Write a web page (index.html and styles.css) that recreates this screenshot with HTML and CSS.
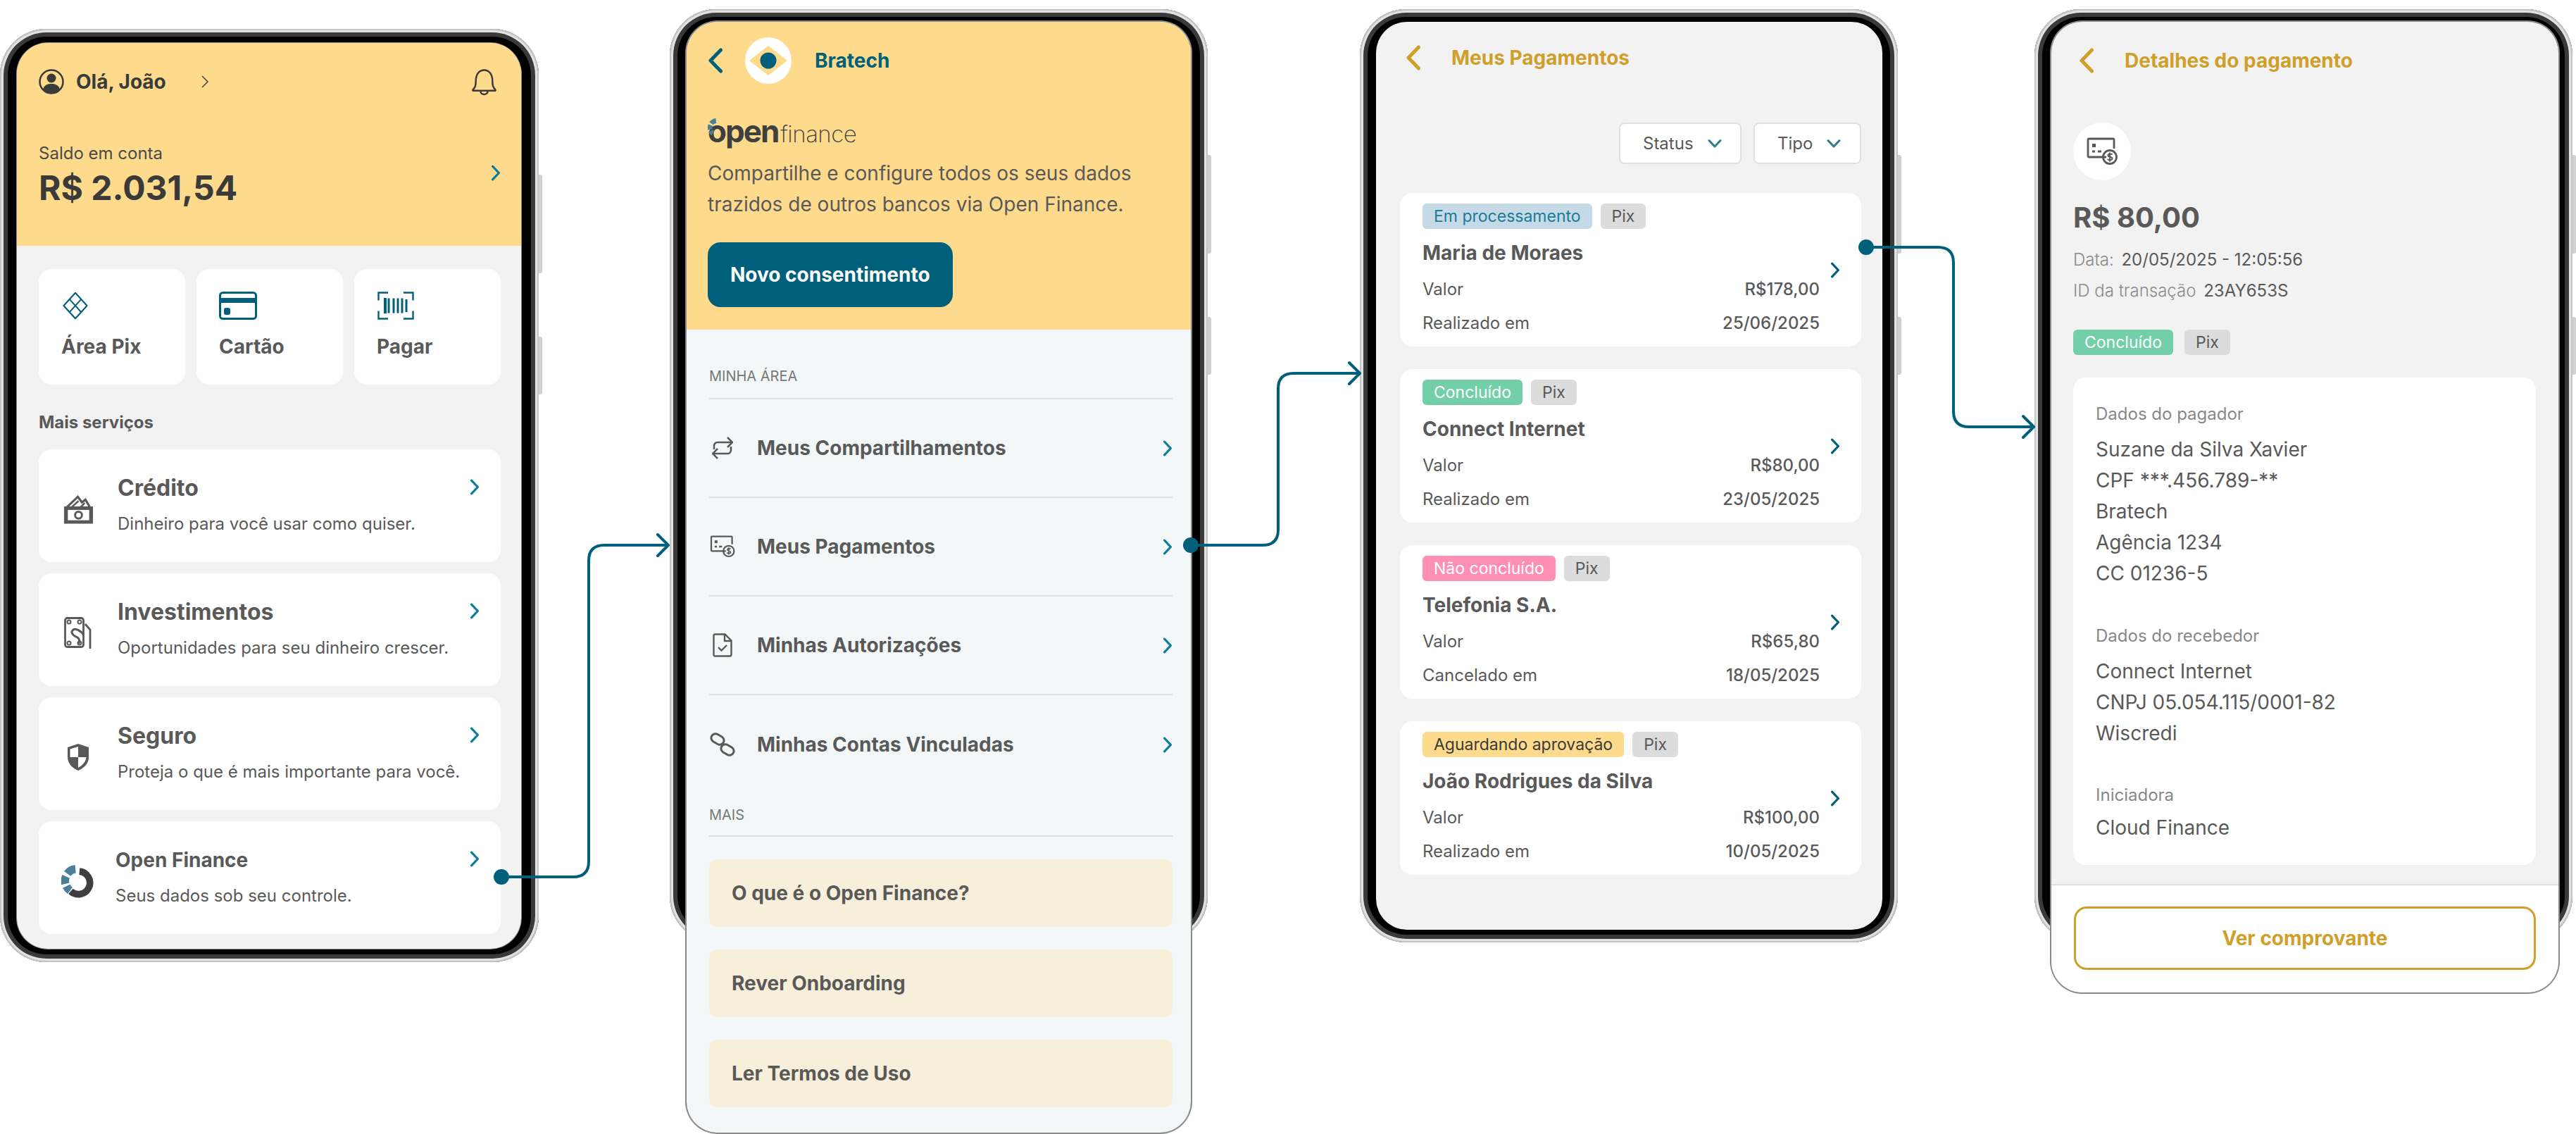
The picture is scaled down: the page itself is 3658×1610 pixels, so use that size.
FILE: index.html
```html
<!DOCTYPE html>
<html lang="pt-BR">

<head>
  <meta charset="utf-8">
  <title>Fluxo Open Finance</title>
  <link rel="stylesheet" href="styles.css">
</head>

<body>
  <!-- shared icons -->
  <svg class="defs" width="0" height="0" aria-hidden="true">
    <symbol id="chev" viewBox="0 0 15 26">
      <path d="M2.5 2.5 12.5 13 2.5 23.5" fill="none" stroke="currentColor" stroke-width="3.6" stroke-linecap="round" stroke-linejoin="round" />
    </symbol>
    <symbol id="back" viewBox="0 0 22 36">
      <path d="M18.5 3 4 18l14.5 15" fill="none" stroke="currentColor" stroke-width="5" stroke-linecap="round" stroke-linejoin="round" />
    </symbol>
    <symbol id="down" viewBox="0 0 20 14">
      <path d="M2 2.5 10 11l8-8.5" fill="none" stroke="currentColor" stroke-width="3" stroke-linecap="round" stroke-linejoin="round" />
    </symbol>
    <symbol id="pay" viewBox="0 0 44 40">
      <path d="M28 28H3.5a1.500 1.500 0 0 1-1.500-1.500V3.500A1.500 1.500 0 0 1 3.500 2h34A1.500 1.500 0 0 1 39 3.500V16" fill="none" stroke="currentColor" stroke-width="2.800" />
      <rect x="8" y="9" width="5" height="5" fill="currentColor" />
      <path d="M8 20h4M16 20h5" stroke="currentColor" stroke-width="3" />
      <circle cx="33" cy="28" r="9.500" fill="none" stroke="currentColor" stroke-width="2.800" />
      <path d="M36.500 24.500c-1-1.200-6-1.600-6 1.200 0 2.900 6 1.300 6 4.300 0 2.800-5.400 2.400-6.800.8M33 21.500v13" fill="none" stroke="currentColor" stroke-width="2" />
    </symbol>
    <symbol id="ring" viewBox="0 0 48 48">
      <path d="M27 9.500A17 17 0 1 1 14 39" fill="none" stroke="#3f3f3f" stroke-width="10" />
      <path d="M21 6A17 17 0 0 0 9 13M7 17A17 17 0 0 0 6 28M7.500 31.500A17 17 0 0 0 13 38" fill="none" stroke="#4a7f9c" stroke-width="12" />
    </symbol>
  </svg>

  <main class="canvas">

    <!-- tela 1: inicio -->
    <section class="phone phone-home">
      <span class="side-btn side-btn-top"></span>
      <span class="side-btn side-btn-low"></span>
      <div class="screen screen-home">
        <header class="hero hero-home">
          <div class="greet">
            <svg class="icon-avatar" viewBox="0 0 36 40">
              <circle cx="18" cy="20" r="16.500" fill="none" stroke="#3a3a3a" stroke-width="2.500" />
              <circle cx="18" cy="15" r="6.500" fill="#3a3a3a" />
              <path d="M6 31c2-7 7-8 12-8s10 1 12 8c-3 3-7 5-12 5s-9-2-12-5z" fill="#3a3a3a" />
            </svg>
            <span class="greet-name">Olá, João</span>
            <svg class="greet-chev" viewBox="0 0 10 20">
              <path d="M1 2l8 8-8 8" fill="none" stroke="#3a3a3a" stroke-width="1.500" />
            </svg>
            <svg class="icon-bell" viewBox="0 0 36 38">
              <path d="M2.500 30c3-3 4-5 4-12C6.500 9 11 3 18 3s11.500 6 11.500 15c0 7 1 9 4 12 .6 1 0 1.500-1 1.500h-29c-1 0-1.600-.5-1-1.500z" fill="none" stroke="#3a3a3a" stroke-width="2.400" stroke-linejoin="round" />
              <path d="M13 32c0 6 10 6 10 0" fill="none" stroke="#3a3a3a" stroke-width="2.400" />
            </svg>
          </div>
          <div class="balance">
            <div>
              <div class="balance-label">Saldo em conta</div>
              <div class="balance-value">R$ 2.031,54</div>
            </div>
            <svg class="chev"><use href="#chev" /></svg>
          </div>
        </header>

        <div class="home-body">
          <div class="quick-grid">
            <a class="quick">
              <svg class="quick-icon" viewBox="0 0 42 46">
                <path d="M21 2 40 23 21 44 2 23zM11.500 12.500l19 21M30.500 12.500l-19 21" fill="none" stroke="#005f7a" stroke-width="2.400" stroke-linejoin="round" />
              </svg>
              <span>Área Pix</span>
            </a>
            <a class="quick">
              <svg class="quick-icon" viewBox="0 0 54 40">
                <rect x="1.500" y="1.500" width="51" height="37" rx="4" fill="none" stroke="#005f7a" stroke-width="3" />
                <rect x="2" y="9" width="50" height="7" fill="#005f7a" />
                <rect x="7" y="23" width="9" height="10" rx="3" fill="#005f7a" />
              </svg>
              <span>Cartão</span>
            </a>
            <a class="quick">
              <svg class="quick-icon" viewBox="0 0 54 40">
                <path d="M16 1.500H2.500v11M38 1.500h13.500v11M16 38.500H2.500v-11M38 38.500h13.500v-11" fill="none" stroke="#005f7a" stroke-width="2.400" />
                <path d="M12 11v18M17 9.500v21M24 9.500v21M30 9.500v21M36 9.500v21M42 11v18" stroke="#005f7a" stroke-width="3" />
                <rect x="10" y="9" width="4" height="22" fill="#005f7a" />
              </svg>
              <span>Pagar</span>
            </a>
          </div>

          <h2 class="more-title">Mais serviços</h2>

          <div class="service-list">
            <a class="service">
              <span class="service-icon">
                <svg class="svc-credit" viewBox="0 0 44 42">
                  <path d="M5 18 21 3l6 8 5-4 6 10" fill="none" stroke="#595959" stroke-width="3.200" />
                  <path d="M12 18 22 9M25 18l6-6" stroke="#595959" stroke-width="2.500" />
                  <path d="M1 17h42v25H1z" fill="#595959" />
                  <rect x="6.500" y="22" width="31" height="15" fill="#fff" />
                  <circle cx="22" cy="29.500" r="5" fill="none" stroke="#595959" stroke-width="3" />
                </svg>
              </span>
              <span class="service-text">
                <b>Crédito</b>
                <small>Dinheiro para você usar como quiser.</small>
              </span>
              <svg class="chev"><use href="#chev" /></svg>
            </a>
            <a class="service">
              <span class="service-icon">
                <svg class="svc-invest" viewBox="0 0 40 46">
                  <rect x="1.500" y="1.500" width="26" height="41" rx="3" fill="none" stroke="#595959" stroke-width="2.800" />
                  <circle cx="7" cy="7" r="2.500" fill="none" stroke="#595959" stroke-width="2" />
                  <circle cx="22" cy="7" r="2.500" fill="none" stroke="#595959" stroke-width="2" />
                  <circle cx="7" cy="37" r="2.500" fill="none" stroke="#595959" stroke-width="2" />
                  <circle cx="22" cy="37" r="2.500" fill="none" stroke="#595959" stroke-width="2" />
                  <path d="M30 10l7 8v27" fill="none" stroke="#595959" stroke-width="2.800" />
                  <path d="M28 26c-4-7-13-11-16-7-3 3 1 8 7 10 3 2 3 6 2 9" fill="none" stroke="#595959" stroke-width="3" />
                </svg>
              </span>
              <span class="service-text">
                <b>Investimentos</b>
                <small>Oportunidades para seu dinheiro crescer.</small>
              </span>
              <svg class="chev"><use href="#chev" /></svg>
            </a>
            <a class="service">
              <span class="service-icon">
                <svg class="svc-shield" viewBox="0 0 32 40">
                  <path d="M16 1 31 6v14c0 10-8 16-15 19C9 36 1 30 1 20V6z" fill="#595959" />
                  <path d="M16 5v15H4.500V8.500zM16 20h11.500c-.5 7-6 12-11.500 15z" fill="#fff" />
                </svg>
              </span>
              <span class="service-text">
                <b>Seguro</b>
                <small>Proteja o que é mais importante para você.</small>
              </span>
              <svg class="chev"><use href="#chev" /></svg>
            </a>
            <a class="service service-open">
              <span class="service-icon">
                <svg class="svc-ring"><use href="#ring" /></svg>
              </span>
              <span class="service-text">
                <b>Open Finance</b>
                <small>Seus dados sob seu controle.</small>
              </span>
              <svg class="chev"><use href="#chev" /></svg>
            </a>
          </div>
        </div>
      </div>
    </section>

    <!-- tela 2: open finance -->
    <section class="phone phone-of">
      <span class="side-btn side-btn-top"></span>
      <span class="side-btn side-btn-low"></span>
      <div class="screen screen-of">
        <header class="hero hero-of">
          <div class="bank-bar">
            <svg class="bank-back"><use href="#back" /></svg>
            <svg class="bank-logo" viewBox="0 0 66 66">
              <circle cx="33" cy="33" r="33" fill="#fff" />
              <path d="M33 12 60 33 33 54 6 33z" fill="#fdda8c" />
              <circle cx="33" cy="33" r="11.500" fill="#005f7a" />
            </svg>
            <span class="bank-name">Bratech</span>
          </div>
          <div class="of-logo">
            <span class="of-open"><span class="of-o">o<svg class="of-ring" viewBox="0 0 48 48"><path d="M21 6A17 17 0 0 0 9 13M7 17A17 17 0 0 0 6 28M7.500 31.500A17 17 0 0 0 13 38" fill="none" stroke="#4a7f9c" stroke-width="12" /></svg></span>pen</span><span class="of-finance">finance</span>
          </div>
          <p class="of-desc">Compartilhe e configure todos os seus dados<br>trazidos de outros bancos via Open Finance.</p>
          <a class="btn-primary">Novo consentimento</a>
        </header>

        <div class="of-body">
          <h3 class="area-title">MINHA ÁREA</h3>
          <a class="area-row">
            <span class="row-icon">
              <svg class="ri-repeat" viewBox="0 0 30 34">
                <path d="M3 19v-5a5 5 0 0 1 5-5h20M22 2l7 7-7 7M27 15v5a5 5 0 0 1-5 5H2M8 18l-7 7 7 7" fill="none" stroke="#595959" stroke-width="2.600" />
              </svg>
            </span>
            <span class="row-label">Meus Compartilhamentos</span>
            <svg class="chev"><use href="#chev" /></svg>
          </a>
          <a class="area-row">
            <span class="row-icon"><svg class="ri-pay"><use href="#pay" /></svg></span>
            <span class="row-label">Meus Pagamentos</span>
            <svg class="chev"><use href="#chev" /></svg>
          </a>
          <a class="area-row">
            <span class="row-icon">
              <svg class="ri-doc" viewBox="0 0 28 34">
                <path d="M3 1.500h14.500l9 9V30a2.500 2.500 0 0 1-2.500 2.500H3A2 2 0 0 1 1.500 30V3A2 2 0 0 1 3 1.500z" fill="none" stroke="#595959" stroke-width="2.400" />
                <path d="M17 2v9h9M8 20l4.500 4.500L20 17" fill="none" stroke="#595959" stroke-width="2.400" />
              </svg>
            </span>
            <span class="row-label">Minhas Autorizações</span>
            <svg class="chev"><use href="#chev" /></svg>
          </a>
          <a class="area-row">
            <span class="row-icon">
              <svg class="ri-link" viewBox="0 0 36 36">
                <rect x="1.500" y="4.500" width="19" height="12" rx="6" transform="rotate(30 11 10.500)" fill="none" stroke="#595959" stroke-width="3" />
                <rect x="15.500" y="19.500" width="19" height="12" rx="6" transform="rotate(30 25 25.500)" fill="none" stroke="#595959" stroke-width="3" />
              </svg>
            </span>
            <span class="row-label">Minhas Contas Vinculadas</span>
            <svg class="chev"><use href="#chev" /></svg>
          </a>
          <h3 class="area-title area-title-more">MAIS</h3>
          <div class="link-list">
            <a class="soft-link">O que é o Open Finance?</a>
            <a class="soft-link">Rever Onboarding</a>
            <a class="soft-link">Ler Termos de Uso</a>
          </div>
        </div>
      </div>
    </section>

    <!-- tela 3: pagamentos -->
    <section class="phone phone-pay">
      <span class="side-btn side-btn-top"></span>
      <span class="side-btn side-btn-low"></span>
      <div class="screen screen-pay">
        <div class="app-bar">
          <svg class="app-back"><use href="#back" /></svg>
          <span class="app-title">Meus Pagamentos</span>
        </div>
        <div class="filters">
          <button class="filter filter-status">Status <svg><use href="#down" /></svg></button>
          <button class="filter filter-type">Tipo <svg><use href="#down" /></svg></button>
        </div>
        <div class="pay-list">
          <article class="pay-card">
            <div class="pay-main">
              <div class="tags"><span class="tag tag-proc">Em processamento</span><span class="tag tag-pix">Pix</span></div>
              <h4>Maria de Moraes</h4>
              <div class="kv"><span>Valor</span><b>R$178,00</b></div>
              <div class="kv"><span>Realizado em</span><b>25/06/2025</b></div>
            </div>
            <svg class="chev chev-dark"><use href="#chev" /></svg>
          </article>
          <article class="pay-card">
            <div class="pay-main">
              <div class="tags"><span class="tag tag-done">Concluído</span><span class="tag tag-pix">Pix</span></div>
              <h4>Connect Internet</h4>
              <div class="kv"><span>Valor</span><b>R$80,00</b></div>
              <div class="kv"><span>Realizado em</span><b>23/05/2025</b></div>
            </div>
            <svg class="chev chev-dark"><use href="#chev" /></svg>
          </article>
          <article class="pay-card">
            <div class="pay-main">
              <div class="tags"><span class="tag tag-fail">Não concluído</span><span class="tag tag-pix">Pix</span></div>
              <h4>Telefonia S.A.</h4>
              <div class="kv"><span>Valor</span><b>R$65,80</b></div>
              <div class="kv"><span>Cancelado em</span><b>18/05/2025</b></div>
            </div>
            <svg class="chev chev-dark"><use href="#chev" /></svg>
          </article>
          <article class="pay-card">
            <div class="pay-main">
              <div class="tags"><span class="tag tag-wait">Aguardando aprovação</span><span class="tag tag-pix">Pix</span></div>
              <h4>João Rodrigues da Silva</h4>
              <div class="kv"><span>Valor</span><b>R$100,00</b></div>
              <div class="kv"><span>Realizado em</span><b>10/05/2025</b></div>
            </div>
            <svg class="chev chev-dark"><use href="#chev" /></svg>
          </article>
        </div>
      </div>
    </section>

    <!-- tela 4: detalhes -->
    <section class="phone phone-detail">
      <span class="side-btn side-btn-top"></span>
      <span class="side-btn side-btn-low"></span>
      <div class="screen screen-detail">
        <div class="detail-main">
          <div class="app-bar app-bar-detail">
            <svg class="app-back"><use href="#back" /></svg>
            <span class="app-title">Detalhes do pagamento</span>
          </div>
          <div class="pay-badge"><svg><use href="#pay" /></svg></div>
          <div class="detail-value">R$ 80,00</div>
          <div class="detail-meta"><span>Data:</span> 20/05/2025 - 12:05:56</div>
          <div class="detail-meta"><span>ID da transação</span> 23AY653S</div>
          <div class="tags tags-detail"><span class="tag tag-done">Concluído</span><span class="tag tag-pix">Pix</span></div>
          <div class="detail-card">
            <h5>Dados do pagador</h5>
            <p>Suzane da Silva Xavier<br>CPF ***.456.789-**<br>Bratech<br>Agência 1234<br>CC 01236-5</p>
            <h5 class="gap-recebedor">Dados do recebedor</h5>
            <p>Connect Internet<br>CNPJ 05.054.115/0001-82<br>Wiscredi</p>
            <h5 class="gap-iniciadora">Iniciadora</h5>
            <p class="last-line">Cloud Finance</p>
          </div>
        </div>
        <footer class="detail-footer">
          <a class="btn-outline">Ver comprovante</a>
        </footer>
      </div>
    </section>

    <!-- setas entre as telas -->
    <svg class="flow" viewBox="0 0 3658 1610">
      <g fill="none" stroke="#005f7a" stroke-width="4" stroke-linecap="round" stroke-linejoin="round">
        <path d="M712 1245H814Q836 1245 836 1223V796Q836 774 858 774H948M934 759 949 774 934 789" />
        <path d="M1691 774H1793Q1815 774 1815 752V552Q1815 530 1837 530H1931M1916 515 1931 530 1916 545" />
        <path d="M2650 351H2752Q2774 351 2774 373V584Q2774 606 2796 606H2888M2873 591 2888 606 2873 621" />
      </g>
      <g fill="#005f7a">
        <circle cx="712" cy="1245" r="11" />
        <circle cx="1691" cy="774" r="11" />
        <circle cx="2650" cy="351" r="11" />
      </g>
    </svg>
  </main>
</body>

</html>
```

FILE: styles.css
```css
* {
  box-sizing: border-box;
}

body {
  margin: 0;
  background: #fff;
  color: #595959;
  font-family: Inter, "Noto Sans", sans-serif;
}

h2, h3, h4, h5, p {
  margin: 0;
  font-weight: 400;
}

a {
  display: block;
  color: inherit;
  text-decoration: none;
}

.defs {
  position: absolute;
}

.canvas {
  position: relative;
  width: 3658px;
  height: 1610px;
  overflow: hidden;
}

.flow {
  position: absolute;
  left: 0;
  top: 0;
  width: 3658px;
  height: 1610px;
  pointer-events: none;
}

/* aparelho */
.phone {
  position: absolute;
  width: 764px;
  height: 1325px;
  padding: 18px 24px;
  border-radius: 66px;
  background: #000;
  box-shadow: inset 0 0 0 2px #c4c4c4, inset 0 0 0 5px #e2e2e2, inset 0 0 0 11px #3a3a3a;
}

.phone-home { left: 0; top: 41px; width: 765px; padding-top: 20px; }
.phone-of { left: 951px; top: 13px; }
.phone-pay { left: 1931px; top: 13px; }
.phone-detail { left: 2889px; top: 13px; }

.side-btn {
  position: absolute;
  left: 100%;
  width: 5px;
  border-radius: 0 3px 3px 0;
  background: #cfcfcf;
}

.side-btn-top { top: 207px; height: 140px; }
.side-btn-low { top: 437px; height: 82px; }

.screen {
  position: relative;
  display: flex;
  flex-direction: column;
  width: 716px;
  border-radius: 44px;
  overflow: hidden;
  background: #f2f2f2;
}

.screen-home { height: 1286px; box-shadow: 0 0 0 1px #888; }
.screen-of { height: 1577px; background: #f4f7f8; box-shadow: 0 0 0 2px #8a8a8a; }
.screen-pay { height: 1289px; width: 719px; left: -1px; }
.screen-detail { height: 1378px; width: 720px; box-shadow: 0 0 0 2px #8a8a8a; }

.hero {
  flex: none;
  background: #fdda8c;
}

.chev {
  flex: none;
  width: 14px;
  height: 23px;
  color: #0a7c9c;
}

.chev-dark {
  color: #005f7a;
}

/* inicio */
.hero-home {
  height: 288px;
  padding: 37px 29px 0 31px;
}

.greet {
  display: flex;
  align-items: center;
  height: 36px;
  color: #3a3a3a;
}

.icon-avatar {
  width: 36px;
  height: 40px;
}

.greet-name {
  margin-left: 17px;
  font-size: 28px;
  font-weight: 700;
}

.greet-chev {
  width: 10px;
  height: 20px;
  margin-left: 50px;
}

.icon-bell {
  width: 37px;
  height: 40px;
  margin-left: auto;
  margin-right: 5px;
}

.balance {
  display: flex;
  align-items: center;
  justify-content: space-between;
  margin-top: 69px;
}

.balance-label {
  color: #4a4a4a;
  font-size: 24px;
  line-height: 30px;
}

.balance-value {
  margin-top: 6px;
  color: #3a3a3a;
  font-size: 48px;
  font-weight: 700;
  line-height: 56px;
}

.balance .chev {
  margin-top: -8px;
}

.home-body {
  padding: 33px 29px 0 31px;
}

.quick-grid {
  display: grid;
  grid-template-columns: repeat(3, 1fr);
  gap: 16px;
}

.quick {
  height: 164px;
  padding: 32px 32px 0;
  border-radius: 18px;
  background: #fff;
  font-size: 28px;
  font-weight: 700;
  line-height: 36px;
}

.quick-icon {
  display: block;
  height: 40px;
  margin-bottom: 20px;
  width: 54px;
}

.quick:first-child .quick-icon {
  width: 40px;
}

.more-title {
  margin: 39px 0 23px;
  font-size: 24px;
  font-weight: 700;
  line-height: 30px;
}

.service-list {
  display: flex;
  flex-direction: column;
  gap: 16px;
}

.service {
  display: flex;
  height: 160px;
  border-radius: 18px;
  background: #fff;
}

.service-icon {
  display: flex;
  flex: none;
  align-items: center;
  justify-content: center;
  width: 112px;
  padding: 10px 0 0 0;
}

.svc-credit { width: 43px; height: 42px; }
.svc-invest { width: 40px; height: 46px; }
.svc-shield { width: 32px; height: 40px; }
.svc-ring { width: 46px; height: 48px; }

.service-text {
  display: flex;
  flex: 1;
  flex-direction: column;
  padding-top: 35px;
}

.service-text b {
  font-size: 32px;
  font-weight: 700;
  line-height: 40px;
}

.service-text small {
  margin-top: 16px;
  font-size: 24px;
  line-height: 30px;
}

.service .chev {
  margin: 42px 30px 0 0;
}

.service-open .service-icon {
  width: 109px;
}

.service-open .service-text b {
  font-size: 28px;
}

/* open finance */
.hero-of {
  height: 437px;
  padding: 22px 30px 0;
}

.bank-bar {
  display: flex;
  align-items: center;
  height: 66px;
}

.bank-back {
  width: 22px;
  height: 36px;
  color: #005f7a;
}

.bank-logo {
  width: 66px;
  height: 66px;
  margin-left: 31px;
}

.bank-name {
  margin-left: 33px;
  color: #005f7a;
  font-size: 28px;
  font-weight: 700;
}

.of-logo {
  display: flex;
  align-items: baseline;
  height: 40px;
  margin-top: 47px;
  margin-bottom: 18px;
  color: #3f3f3f;
  line-height: 40px;
}

.of-open {
  font-size: 44px;
  font-weight: 700;
  letter-spacing: -2px;
}

.of-o {
  position: relative;
}

.of-ring {
  position: absolute;
  left: 0;
  top: 9px;
  width: 27px;
  height: 27px;
}

.of-finance {
  margin-left: 3px;
  font-size: 33px;
  font-weight: 200;
  letter-spacing: -.5px;
}

.of-desc {
  font-size: 28px;
  line-height: 44px;
}

.btn-primary {
  width: 348px;
  height: 92px;
  margin-top: 32px;
  padding-left: 32px;
  border-radius: 18px;
  background: #005f7a;
  color: #fff;
  font-size: 28px;
  font-weight: 700;
  line-height: 92px;
}

.of-body {
  padding: 0 26px 0 32px;
}

.area-title {
  padding: 54px 0 19px;
  border-bottom: 2px solid #dcdfe0;
  color: #777;
  font-size: 20px;
  line-height: 24px;
}

.area-title-more {
  padding: 18px 0 17px;
}

.area-row {
  display: flex;
  align-items: center;
  height: 140px;
  border-bottom: 2px solid #dcdfe0;
}

.area-row:nth-of-type(4) {
  border-bottom: 0;
}

.row-icon {
  display: flex;
  flex: none;
  align-items: center;
  justify-content: center;
  width: 37px;
  margin-right: 31px;
}

.ri-repeat { width: 30px; height: 34px; }
.ri-pay { width: 36px; height: 32px; }
.ri-doc { width: 28px; height: 34px; }
.ri-link { width: 36px; height: 36px; }

.row-label {
  flex: 1;
  font-size: 28px;
  font-weight: 700;
}

.area-row .chev {
  margin-right: 0;
}

.link-list {
  display: flex;
  flex-direction: column;
  gap: 32px;
  margin-top: 32px;
}

.soft-link {
  height: 96px;
  padding-left: 32px;
  border-radius: 12px;
  background: #f7efd9;
  font-size: 28px;
  font-weight: 700;
  line-height: 96px;
}

/* pagamentos */
.app-bar {
  display: flex;
  flex: none;
  align-items: center;
  height: 102px;
  padding-left: 42px;
  color: #d09f2a;
}

.app-back {
  flex: none;
  width: 22px;
  height: 36px;
}

.app-title {
  margin-left: 43px;
  font-size: 28px;
  font-weight: 700;
}

.filters {
  display: flex;
  justify-content: flex-end;
  gap: 17px;
  margin-top: 41px;
  padding-right: 30px;
}

.filter {
  display: flex;
  align-items: center;
  height: 59px;
  padding: 0 0 0 32px;
  border: 2px solid #e0e0e0;
  border-radius: 8px;
  background: #fff;
  color: #595959;
  font: 400 24px Inter, sans-serif;
}

.filter svg {
  width: 20px;
  height: 14px;
  margin-left: 20px;
  color: #2d7c8a;
}

.filter-status { width: 174px; }
.filter-type { width: 153px; }

.pay-list {
  display: flex;
  flex-direction: column;
  gap: 32px;
  margin: 41px 30px 0 34px;
}

.pay-card {
  display: flex;
  gap: 15px;
  height: 218px;
  padding: 15px 30px 0 32px;
  border-radius: 18px;
  background: #fff;
}

.pay-card .chev {
  margin-top: 83px;
}

.pay-main {
  flex: 1;
}

.tags {
  display: flex;
  gap: 12px;
}

.tag {
  height: 36px;
  padding: 0 16px;
  border-radius: 6px;
  font-size: 23px;
  line-height: 36px;
}

.tag-proc { background: #c5dae6; color: #1a7c96; }
.tag-done { background: #72cfa8; color: #fff; }
.tag-fail { background: #ff8fb4; color: #fff; }
.tag-wait { background: #fdda8c; color: #3a3a3a; }
.tag-pix { background: #dcdcdc; color: #595959; }

.pay-main h4 {
  margin: 16px 0 19px;
  font-size: 28px;
  font-weight: 700;
  line-height: 36px;
}

.kv {
  display: flex;
  justify-content: space-between;
  margin-bottom: 18px;
  font-size: 24px;
  line-height: 30px;
}

.kv b {
  font-weight: 500;
}

/* detalhes */
.detail-main {
  flex: 1;
  padding-left: 31px;
  padding-right: 32px;
}

.app-bar-detail {
  height: 110px;
  padding-left: 8px;
}

.pay-badge {
  display: flex;
  align-items: center;
  justify-content: center;
  width: 82px;
  height: 82px;
  margin-top: 33px;
  border-radius: 50%;
  background: #fff;
}

.pay-badge svg {
  width: 44px;
  height: 40px;
}

.detail-value {
  margin-top: 29px;
  font-size: 40px;
  font-weight: 700;
  line-height: 48px;
}

.detail-meta {
  font-size: 24px;
  line-height: 44px;
}

.detail-value + .detail-meta {
  margin-top: 14px;
}

.detail-meta span {
  margin-right: 4px;
  color: #8a8a8a;
  font-weight: 300;
}

.tags-detail {
  gap: 16px;
  margin-top: 33px;
}

.detail-card {
  height: 692px;
  margin-top: 32px;
  padding: 37px 32px 0;
  border-radius: 18px;
  background: #fff;
}

.detail-card h5 {
  color: #888;
  font-size: 24px;
  line-height: 30px;
}

.detail-card p {
  margin-top: 13px;
  font-size: 28px;
  line-height: 44px;
}

.detail-card .gap-recebedor { margin-top: 52px; }
.detail-card .gap-iniciadora { margin-top: 51px; }
.detail-card .last-line { margin-top: 9px; }

.detail-footer {
  flex: none;
  height: 154px;
  padding: 30px 32px 0 32px;
  border-top: 2px solid #dedede;
  background: #fff;
}

.btn-outline {
  height: 90px;
  border: 3px solid #d09f2a;
  border-radius: 18px;
  color: #d09f2a;
  font-size: 28px;
  font-weight: 700;
  line-height: 84px;
  text-align: center;
}
```
